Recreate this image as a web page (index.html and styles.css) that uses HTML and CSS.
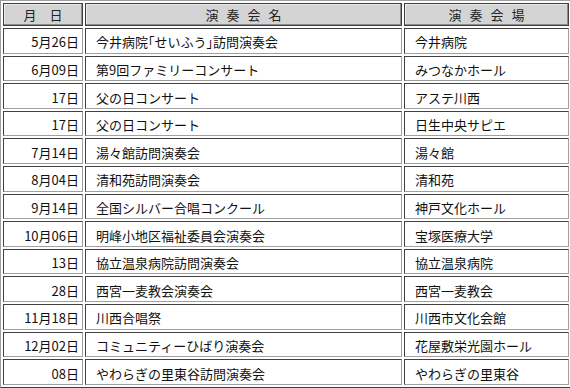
FILE: index.html
```html
<!DOCTYPE html>
<html lang="ja">
<head>
<meta charset="utf-8">
<link rel="stylesheet" href="styles.css">
</head>
<body>
<table class="schedule">
  <colgroup>
    <col class="c-date">
    <col class="c-name">
    <col class="c-place">
  </colgroup>
  <thead>
    <tr>
      <th class="h-date">月日</th>
      <th class="h-wide">演奏会名</th>
      <th class="h-wide">演奏会場</th>
    </tr>
  </thead>
  <tbody>
    <tr><td class="date">5月26日</td><td>今井病院｢せいふう｣訪問演奏会</td><td>今井病院</td></tr>
    <tr><td class="date">6月09日</td><td>第9回ファミリーコンサート</td><td>みつなかホール</td></tr>
    <tr><td class="date">17日</td><td>父の日コンサート</td><td>アステ川西</td></tr>
    <tr><td class="date">17日</td><td>父の日コンサート</td><td>日生中央サピエ</td></tr>
    <tr><td class="date">7月14日</td><td>湯々館訪問演奏会</td><td>湯々館</td></tr>
    <tr><td class="date">8月04日</td><td>清和苑訪問演奏会</td><td>清和苑</td></tr>
    <tr><td class="date">9月14日</td><td>全国シルバー合唱コンクール</td><td>神戸文化ホール</td></tr>
    <tr><td class="date">10月06日</td><td>明峰小地区福祉委員会演奏会</td><td>宝塚医療大学</td></tr>
    <tr><td class="date">13日</td><td>協立温泉病院訪問演奏会</td><td>協立温泉病院</td></tr>
    <tr><td class="date">28日</td><td>西宮一麦教会演奏会</td><td>西宮一麦教会</td></tr>
    <tr><td class="date">11月18日</td><td>川西合唱祭</td><td>川西市文化会館</td></tr>
    <tr><td class="date">12月02日</td><td>コミュニティーひばり演奏会</td><td>花屋敷栄光園ホール</td></tr>
    <tr><td class="date">08日</td><td>やわらぎの里東谷訪問演奏会</td><td>やわらぎの里東谷</td></tr>
  </tbody>
</table>
</body>
</html>
```
FILE: styles.css
```css
html, body {
  margin: 0;
  padding: 0;
  background: #ffffff;
}

body {
  font-family: "Noto Sans CJK JP", "Noto Sans", sans-serif;
  font-size: 13px;
  color: #111111;
}

.schedule {
  width: 570px;
  height: 388px;
  border-collapse: separate;
  border-spacing: 2px;
  table-layout: fixed;
  border: 1px solid;
  border-color: #a0a0a0 #404040 #404040 #a0a0a0;
  background: #ffffff;
}

.c-date { width: 80px; }
.c-name { width: 317px; }
.c-place { width: 165px; }

.schedule th {
  height: 21px;
  padding: 0;
  background: #d4d4d4;
  font-weight: normal;
  color: #222222;
  border: 1px solid #404040;
  box-shadow: inset -1px -1px 0 #8c8c8c, inset 1px 1px 0 #ececec;
  text-align: center;
  line-height: 20px;
}

.h-date { letter-spacing: 13px; text-indent: 13px; }
.h-wide { letter-spacing: 8px; text-indent: 8px; }

.schedule td {
  padding: 3px 0 0 10px;
  border: 1px solid;
  border-color: #404040 #a0a0a0 #a0a0a0 #404040;
  line-height: 20px;
  white-space: nowrap;
}

.schedule td.date {
  text-align: right;
  padding: 3px 3px 0 0;
}
```
